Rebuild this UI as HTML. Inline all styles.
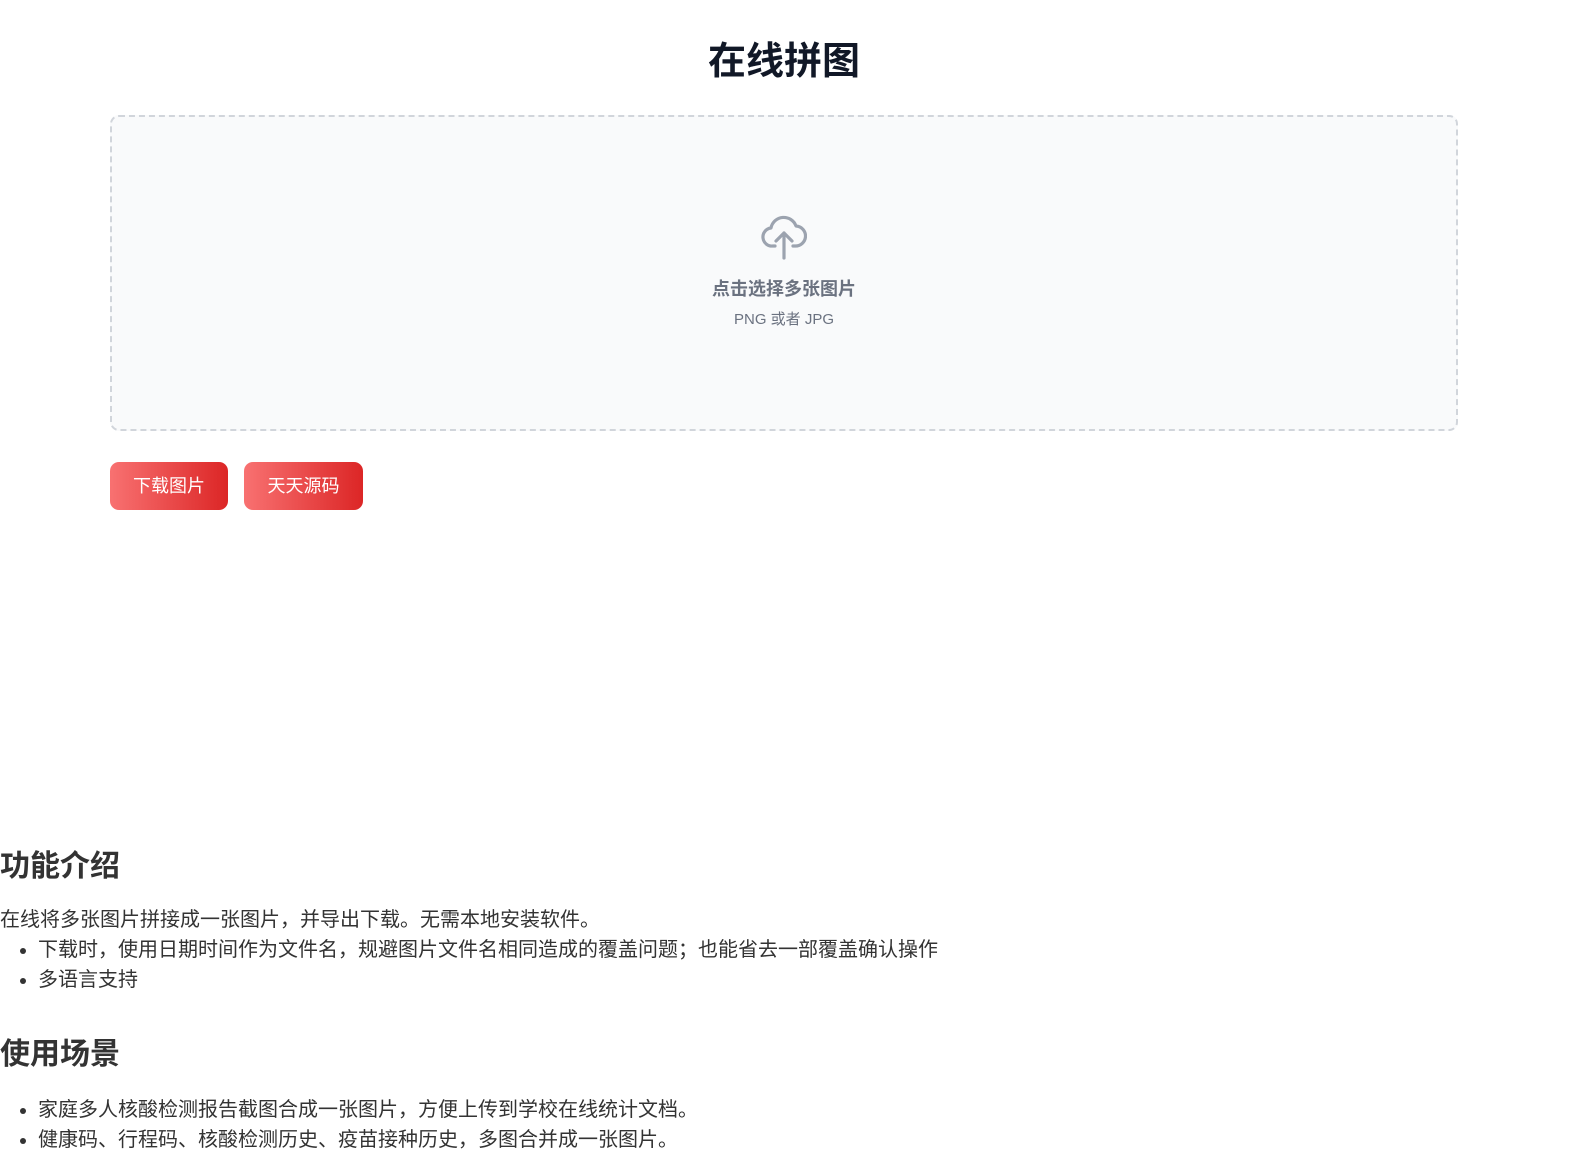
<!DOCTYPE html>
<html><head><meta charset="utf-8"><style>
body{margin:0;background:#fff;font-family:"Liberation Sans","Noto Sans CJK SC",sans-serif;}
h1{position:absolute;top:36px;left:0;width:1568px;text-align:center;margin:0;font-size:38px;line-height:52px;color:#111827;font-weight:bold;}
.box{position:absolute;left:110px;top:115px;width:1344px;height:312px;border:2px dashed #d1d5db;border-radius:9px;background:#f9fafb;}
.icon{position:absolute;left:761px;top:212px;}
.t1{position:absolute;top:277px;left:0;width:1568px;text-align:center;font-size:18px;font-weight:bold;color:#6b7280;line-height:24px;}
.t2{position:absolute;top:310px;left:0;width:1568px;text-align:center;font-size:15px;color:#6b7280;line-height:20px;}
.btn{position:absolute;top:462px;height:48px;border-radius:9px;background:linear-gradient(90deg,#f87171,#dc2626);color:#fff;font-size:18px;line-height:48px;text-align:center;}
.c{position:absolute;left:0;color:#333;}
h2{margin:0;font-size:30px;line-height:40px;font-weight:bold;}
p,li{font-size:20px;line-height:30px;margin:0;}
ul{margin:0;padding-left:38px;}
</style></head><body>
<h1>在线拼图</h1>
<div class="box"></div>
<svg class="icon" width="46" height="48" viewBox="0 0 46 48" fill="none" stroke="#9ca3af" stroke-width="3.2" stroke-linecap="round" stroke-linejoin="round"><path d="M14 34 H12 A9 9 0 0 1 10 16 A13 13 0 0 1 35 14 A9.5 9.5 0 0 1 34 34 H32"/><path d="M23 46 V21 M15 29 L23 21 L31 29"/></svg>
<div class="t1">点击选择多张图片</div>
<div class="t2">PNG 或者 JPG</div>
<div class="btn" style="left:110px;width:118px">下载图片</div>
<div class="btn" style="left:244px;width:119px">天天源码</div>
<div class="c" style="top:847px">
<h2>功能介绍</h2>
<p style="margin-top:18px">在线将多张图片拼接成一张图片，并导出下载。无需本地安装软件。</p>
<ul><li>下载时，使用日期时间作为文件名，规避图片文件名相同造成的覆盖问题；也能省去一部覆盖确认操作</li><li>多语言支持</li></ul>
</div>
<div class="c" style="top:1035px">
<h2>使用场景</h2>
<ul style="margin-top:20px"><li>家庭多人核酸检测报告截图合成一张图片，方便上传到学校在线统计文档。</li><li>健康码、行程码、核酸检测历史、疫苗接种历史，多图合并成一张图片。</li></ul>
</div>
</body></html>
